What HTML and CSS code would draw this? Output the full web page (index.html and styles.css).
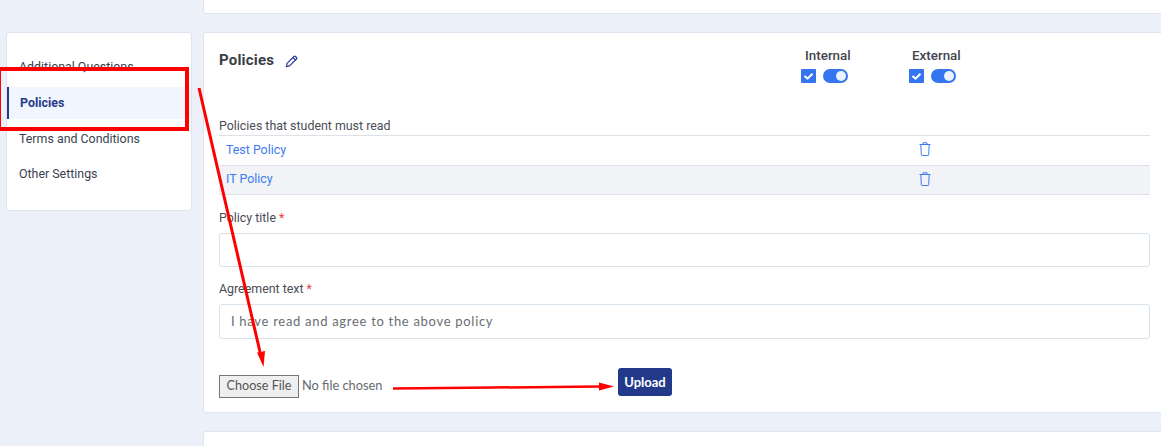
FILE: index.html
```html
<!DOCTYPE html>
<html lang="en">
<head>
<meta charset="utf-8">
<title>Policies</title>
<link rel="stylesheet" href="styles.css">
</head>
<body>
<div class="page">
  <div class="top-row">
    <div class="card stub-top"></div>
  </div>
  <div class="columns">
    <nav class="side card">
      <a class="side-item">Additional Questions</a>
      <a class="side-item active">Policies</a>
      <a class="side-item">Terms and Conditions</a>
      <a class="side-item">Other Settings</a>
    </nav>
    <main class="card panel">
      <div class="head">
        <div class="title-wrap">
          <h2 class="title">Policies</h2>
          <svg class="pencil" width="13" height="13" viewBox="0 0 12 12" fill="none" stroke="#2a3a9c" stroke-width="1.1" stroke-linejoin="round"><path d="M1.3 10.7l.6-2.9L8.3 1.4a1 1 0 0 1 1.4 0l.9.9a1 1 0 0 1 0 1.4L4.2 10.1z"/><path d="M7.4 2.4l2.2 2.2"/></svg>
        </div>
        <div class="toggles">
          <div class="toggle-group tg-int">
            <div class="tg-label">Internal</div>
            <div class="tg-controls">
              <span class="check"><svg width="15" height="14" viewBox="0 0 15 14" fill="none" stroke="#fff" stroke-width="2"><path d="M3.5 7l3 2.6L11.5 4.8"/></svg></span>
              <span class="switch"><span class="knob"></span></span>
            </div>
          </div>
          <div class="toggle-group tg-ext">
            <div class="tg-label">External</div>
            <div class="tg-controls">
              <span class="check"><svg width="15" height="14" viewBox="0 0 15 14" fill="none" stroke="#fff" stroke-width="2"><path d="M3.5 7l3 2.6L11.5 4.8"/></svg></span>
              <span class="switch"><span class="knob"></span></span>
            </div>
          </div>
        </div>
      </div>
      <div class="list-label">Policies that student must read</div>
      <div class="row">
        <a class="policy-link">Test Policy</a>
        <svg class="trash" width="12" height="14" viewBox="0 0 12 14" fill="none" stroke="#3f7bf0" stroke-width="1"><path d="M.5 2.5h11M4 2.5V.8h4v1.7M1.8 2.5l.5 10.2q0 .8.8.8h5.8q.8 0 .8-.8l.5-10.2"/></svg>
      </div>
      <div class="row alt">
        <a class="policy-link">IT Policy</a>
        <svg class="trash" width="12" height="14" viewBox="0 0 12 14" fill="none" stroke="#3f7bf0" stroke-width="1"><path d="M.5 2.5h11M4 2.5V.8h4v1.7M1.8 2.5l.5 10.2q0 .8.8.8h5.8q.8 0 .8-.8l.5-10.2"/></svg>
      </div>
      <label class="field-label first">Policy title <span class="req">*</span></label>
      <input class="text-input short" type="text">
      <label class="field-label second">Agreement text <span class="req">*</span></label>
      <input class="text-input" type="text" placeholder="I have read and agree to the above policy">
      <div class="upload-row">
        <input class="file" type="file">
        <button class="upload" type="button">Upload</button>
      </div>
    </main>
  </div>
  <div class="card stub-bottom"></div>
</div>
<svg class="marks" width="1161" height="446" viewBox="0 0 1161 446" fill="none">
  <rect x="-1" y="69" width="188" height="60" stroke="#f00" stroke-width="4"/>
  <path d="M199 88L260 352" stroke="#f00" stroke-width="3"/>
  <path d="M263.5 367L257 352.5L265 351z" fill="#f00"/>
  <path d="M393 388.5L600 386.5" stroke="#f00" stroke-width="2.5"/>
  <path d="M614 386.5L599 382.5L599 390.5z" fill="#f00"/>
</svg>
</body>
</html>
```
FILE: styles.css
```css
* { box-sizing: border-box; }
html, body { margin: 0; height: 100%; }
body {
  background: #ecf0f8;
  font-family: Roboto, "Liberation Sans", sans-serif;
  color: #3a3d46;
  overflow: hidden;
}
.page {
  position: relative;
  width: 1161px;
  height: 446px;
  overflow: hidden;
  padding-left: 6px;
}
.card {
  background: #fff;
  border: 1px solid #dfe5ee;
  border-radius: 3px;
}
.top-row { padding-left: 197px; }
.stub-top {
  height: 14px;
  margin-right: -20px;
  border-top: 0;
  border-radius: 0 0 3px 3px;
}
.columns {
  display: flex;
  align-items: flex-start;
  gap: 11px;
  margin-top: 18px;
}
.side {
  flex: 0 0 186px;
  height: 179px;
  padding-top: 18px;
}
.side-item {
  display: block;
  height: 32px;
  padding-left: 12px;
  margin-bottom: 4px;
  font-size: 12.4px;
  line-height: 32px;
  color: #3a3f50;
}
.side-item.active {
  padding-left: 11px;
  border-left: 2px solid #223a8a;
  font-weight: 700;
  color: #283a8c;
  background: #f1f6fe;
}
.side-item:nth-child(3) { margin-bottom: 3px; }
.panel {
  flex: 0 0 978px;
  height: 381px;
  padding: 0 30px 0 15px;
}
.head {
  display: flex;
  height: 86px;
  position: relative;
}
.title-wrap {
  display: flex;
  align-items: center;
  gap: 11px;
  height: 54px;
}
.title {
  margin: 0;
  font-size: 15px;
  font-weight: 700;
  color: #3a3d46;
  letter-spacing: .2px;
}
.pencil { margin-top: 2px; }
.toggles {
  display: flex;
  margin-left: auto;
  margin-right: 189px;
  gap: 58px;
  padding-top: 15px;
}
.tg-int { width: 50px; }
.tg-ext { width: 52px; }
.tg-label {
  font-size: 13.4px;
  font-weight: 500;
  line-height: 15px;
  padding-left: 4px;
  white-space: nowrap;
  color: #43464e;
}
.tg-ext .tg-label { padding-left: 3px; }
.tg-controls {
  display: flex;
  align-items: center;
  gap: 7px;
  margin-top: 6px;
}
.check {
  display: flex;
  width: 15px;
  height: 14px;
  background: #3575ef;
  border-radius: 1px;
}
.switch {
  position: relative;
  display: block;
  width: 25px;
  height: 14px;
  background: #3575ef;
  border-radius: 7px;
}
.knob {
  position: absolute;
  right: 2px;
  top: 2px;
  width: 10px;
  height: 10px;
  border-radius: 50%;
  background: #eaf3fd;
}
.list-label {
  font-size: 12.4px;
  line-height: 14px;
  height: 17px;
  border-bottom: 1px solid #dde1e8;
  color: #4a4d55;
}
.row {
  display: flex;
  align-items: center;
  height: 30px;
  padding-left: 7px;
  padding-bottom: 2px;
  position: relative;
  border-bottom: 1px solid #dde1e8;
}
.row.alt { height: 29px; padding-bottom: 3px; background: #f1f3f7; }
.policy-link {
  font-size: 12.4px;
  color: #3f7bf0;
}
.trash { position: absolute; left: 700px; top: 6px; }
.field-label {
  display: block;
  font-size: 12.4px;
  line-height: 16px;
  color: #4a4d55;
}
.field-label.first { margin-top: 15px; }
.field-label.second { margin-top: 14px; }
.req { color: #f03a3a; }
.text-input {
  display: block;
  width: 100%;
  height: 35px;
  margin-top: 7px;
  padding: 0 11px 2px;
  background: #fff;
  border: 1px solid #d7e2ea;
  border-radius: 3px;
  outline: 0;
  font-family: Lato, "Open Sans", sans-serif;
  font-size: 13px;
  letter-spacing: .7px;
}
.text-input.short { height: 34px; }
.text-input::placeholder { color: #6a6d73; opacity: 1; }
.upload-row {
  display: flex;
  align-items: flex-start;
  margin-top: 29px;
}
.file {
  width: 399px;
  margin-top: 7px;
  font-family: Lato, sans-serif;
  font-size: 12.8px;
  color: #666a70;
}
.file::file-selector-button {
  width: 80px;
  height: 23px;
  padding: 0 0 2px;
  margin-right: 3px;
  background: #efefef;
  border: 1px solid #767676;
  border-radius: 0;
  font-family: Lato, sans-serif;
  font-size: 12.6px;
  color: #555;
}
.upload {
  width: 54px;
  height: 28px;
  padding: 0;
  border: 0;
  border-radius: 3px;
  background: #233a8b;
  color: #fff;
  font-family: Lato, sans-serif;
  font-size: 13px;
  font-weight: 700;
}
.stub-bottom {
  margin-top: 18px;
  margin-left: 197px;
  margin-right: -20px;
  height: 60px;
}
.marks { position: absolute; left: 0; top: 0; pointer-events: none; }
```
